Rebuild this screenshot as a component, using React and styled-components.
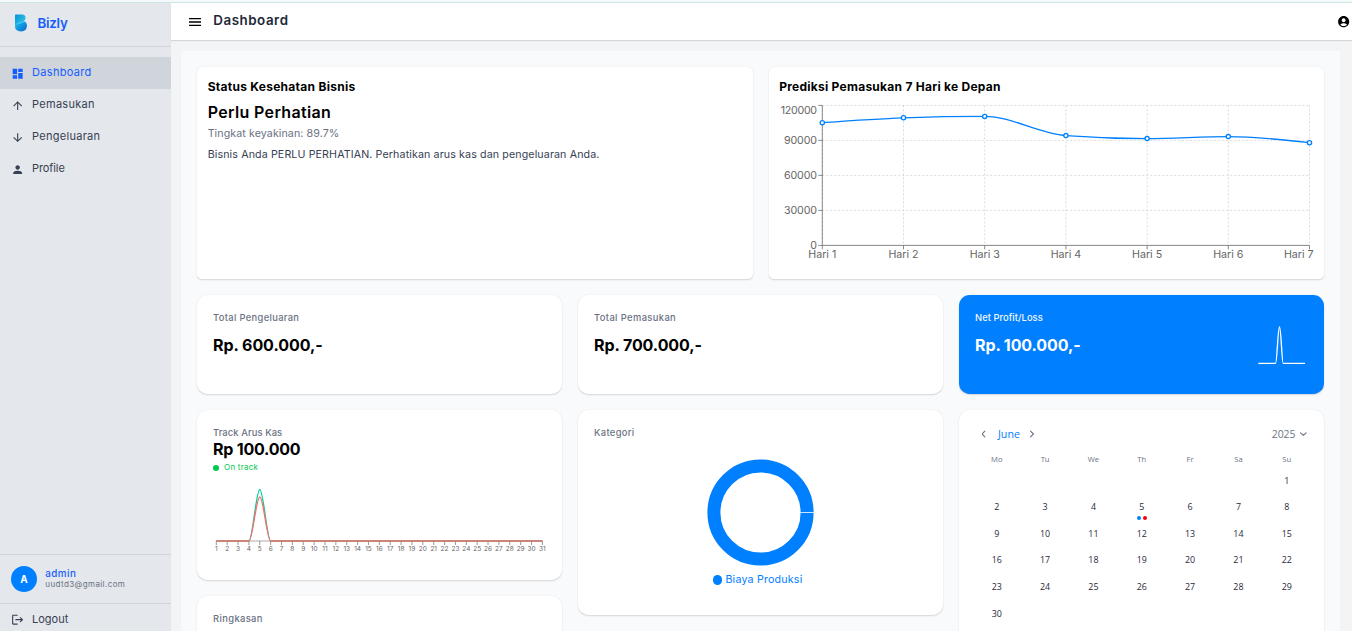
import React from "react";
import styled, { createGlobalStyle } from "styled-components";
import {
  MdDashboard,
  MdArrowUpward,
  MdArrowDownward,
  MdPerson,
  MdLogout,
  MdMenu,
  MdAccountCircle,
} from "react-icons/md";

const SANS = `Inter, "Open Sans", sans-serif`;
const CAL = `"Open Sans", "Noto Sans", sans-serif`;

const Global = createGlobalStyle`
  * { box-sizing: border-box; }
  body { margin: 0; background: #f3f4f6; font-family: ${SANS}; overflow: hidden; }
`;

const Page = styled.div`
  height: 631px;
  display: flex;
  flex-direction: column;
  overflow: hidden;
`;
const TopStrip = styled.div`
  flex: none;
  height: 3px;
  background: #f4f9fa;
  border-bottom: 1px solid #cfe6e6;
`;
const Shell = styled.div`
  flex: 1;
  min-height: 0;
  display: flex;
`;

const Text = styled.div`
  font-size: ${(p) => p.$size}px;
  font-weight: ${(p) => p.$weight || 400};
  letter-spacing: ${(p) => p.$track || 0}px;
  line-height: ${(p) => p.$line || 16}px;
  color: ${(p) => p.$color || "#000"};
  margin-top: ${(p) => p.$top || 0}px;
  white-space: nowrap;
`;

/* Sidebar */
const Sidebar = styled.aside`
  flex: none;
  width: 171px;
  background: #e4e7eb;
  display: flex;
  flex-direction: column;
`;
const Brand = styled.div`
  height: 44px;
  padding: 0 0 2.5px 14px;
  display: flex;
  align-items: center;
  gap: 9.5px;
  border-bottom: 1px solid #d0d4d9;
`;
const Nav = styled.nav`
  flex: 1;
  padding-top: 10px;
`;
const NavItem = styled.div`
  height: 32px;
  padding-left: 11px;
  display: flex;
  align-items: center;
  gap: 7.7px;
  color: ${(p) => (p.$active ? "#155dfc" : "#364153")};
  background: ${(p) => (p.$active ? "#d0d4db" : "transparent")};
  svg { margin-top: 1px; flex: none; }
  span { padding-bottom: 2px; }
`;
const User = styled.div`
  height: 49px;
  padding-left: 11px;
  display: flex;
  align-items: center;
  gap: 8.3px;
  border-top: 1px solid #d0d4d9;
`;
const Avatar = styled.div`
  width: 26px;
  height: 26px;
  border-radius: 50%;
  background: #0080ff;
  color: #fff;
  font-size: 10px;
  font-weight: 700;
  display: flex;
  align-items: center;
  justify-content: center;
`;
const UserText = styled.div`
  padding-bottom: 2px;
`;
const LogoutRow = styled(NavItem)`
  height: 28px;
  padding-top: 3px;
  border-top: 1px solid #d0d4d9;
  span { padding-bottom: 0; }
`;

/* Header and main area */
const Body = styled.div`
  flex: 1;
  min-width: 0;
  display: flex;
  flex-direction: column;
`;
const Header = styled.header`
  flex: none;
  height: 37px;
  background: #fff;
  box-shadow: 0 1px 1px rgba(0, 0, 0, 0.12);
  padding: 0 1.5px 0 16px;
  display: flex;
  align-items: center;
  z-index: 1;
  svg { margin-top: 1px; }
`;
const HeaderTitle = styled(Text)`
  flex: 1;
  padding: 0 0 3px 10.3px;
`;
const Main = styled.main`
  flex: 1;
  min-height: 0;
  padding: 11px 12px 0 10px;
`;
const Canvas = styled.div`
  height: 100%;
  overflow: hidden;
  background: #f9fafb;
  padding: 16px 16px 0;
`;
const Grid = styled.div`
  display: grid;
  grid-template-columns: repeat(${(p) => p.$cols}, minmax(0, 1fr));
  gap: 16px;
  align-items: start;
  margin-bottom: 16px;
`;
const Stack = styled.div`
  display: flex;
  flex-direction: column;
  gap: 16px;
`;
const Card = styled.section`
  height: ${(p) => p.$h}px;
  padding: ${(p) => p.$pad || "15px 16px"};
  border-radius: ${(p) => p.$r || 10.67}px;
  background: ${(p) => p.$bg || "#fff"};
  box-shadow: 0 0.67px 2px rgba(0, 0, 0, 0.08), 0 0.67px 1.33px -0.67px rgba(0, 0, 0, 0.08);
`;
const ProfitCard = styled(Card)`
  display: flex;
  justify-content: space-between;
`;
const Status = styled.div`
  display: flex;
  align-items: center;
  gap: 5px;
  margin-top: 2px;
`;
const Dot = styled.i`
  width: ${(p) => p.$d}px;
  height: ${(p) => p.$d}px;
  border-radius: 50%;
  background: ${(p) => p.$c};
`;
const Drawing = styled.svg`
  display: block;
  overflow: visible;
  margin: ${(p) => p.$m || 0};
  text { font-family: ${SANS}; fill: #666; }
`;
const Legend = styled.div`
  display: flex;
  align-items: center;
  justify-content: center;
  gap: 3.6px;
  padding-right: 6px;
`;

/* Calendar */
const CalHead = styled.div`
  display: flex;
  align-items: center;
  font-family: ${CAL};
  padding: 0 0 0 7px;
  margin-bottom: 9px;
`;
const Month = styled(Text)`
  margin: 0 9.8px 0 8px;
`;
const Year = styled(Text)`
  margin-left: auto;
  margin-right: 4.5px;
`;
const Week = styled.div`
  display: grid;
  grid-template-columns: repeat(7, 48.33px);
  height: ${(p) => p.$h}px;
  margin-left: -2.4px;
  text-align: center;
  font-family: ${CAL};
`;
const Day = styled.div`
  font-size: 8.9px;
  line-height: 14px;
  color: #1e2939;
`;
const WeekDay = styled(Day)`
  font-size: 7.6px;
  color: #6a7282;
`;
const Marks = styled.div`
  display: flex;
  justify-content: center;
  gap: 1.7px;
  margin-top: 2px;
`;

function Logo() {
  return (
    <svg width="14" height="18" viewBox="0 0 14 18">
      <defs>
        <linearGradient id="lgTop" x1="0" y1="0" x2="1" y2="1">
          <stop offset="0" stopColor="#0c8fd0" />
          <stop offset="1" stopColor="#35d3f5" />
        </linearGradient>
        <linearGradient id="lgBottom" x1="0" y1="0" x2="1" y2="1">
          <stop offset="0" stopColor="#2bc6ee" />
          <stop offset="0.5" stopColor="#0f96e0" />
          <stop offset="1" stopColor="#0b66c4" />
        </linearGradient>
      </defs>
      <path d="M1 1.6Q1 .6 2 .6H8.2Q11.6 .7 11.6 4Q11.6 6.8 9 7.4L3.4 9.2L1 12.5Z" fill="url(#lgTop)" />
      <path d="M1 12.5Q1.4 7 7.2 6.7Q13 6.9 13 11.8Q12.8 17.3 7 17.4Q1.2 17.2 1 12.5Z" fill="url(#lgBottom)" />
      <path d="M1 12.2Q3.4 8 8.4 7.4L11.4 6.8Q9 9.6 5.4 9.8Q2.6 10.2 1 12.2Z" fill="#5fe3fb" opacity=".6" />
    </svg>
  );
}

/* Cubic path through the points, with slopes that never overshoot. */
function monotonePath(pts) {
  const n = pts.length;
  const s = [];
  for (let i = 0; i < n - 1; i++)
    s.push((pts[i + 1][1] - pts[i][1]) / (pts[i + 1][0] - pts[i][0]));
  const t = pts.map((_, i) => {
    if (i === 0 || i === n - 1) return null;
    const a = s[i - 1];
    const b = s[i];
    return a * b <= 0
      ? 0
      : Math.sign(a) * Math.min(Math.abs(a), Math.abs(b), Math.abs(a + b) / 4) * 2;
  });
  t[0] = (3 * s[0] - t[1]) / 2;
  t[n - 1] = (3 * s[n - 2] - t[n - 2]) / 2;
  let d = `M${pts[0][0]},${pts[0][1]}`;
  for (let i = 0; i < n - 1; i++) {
    const [x0, y0] = pts[i];
    const [x1, y1] = pts[i + 1];
    const h = (x1 - x0) / 3;
    d += `C${x0 + h},${y0 + h * t[i]} ${x1 - h},${y1 - h * t[i + 1]} ${x1},${y1}`;
  }
  return d;
}

const forecast = [22.7, 17.8, 16.4, 35.6, 38.6, 36.6, 42.7];

function ForecastChart() {
  const left = 43.3;
  const step = 81.2;
  const top = 5.4;
  const bottom = 145.4;
  const right = left + 6 * step;
  const xs = forecast.map((_, i) => left + i * step);
  const ys = [0, 1, 2, 3, 4].map((i) => top + i * 35);
  const pts = forecast.map((y, i) => [xs[i], y]);
  return (
    <Drawing width="534" height="165" $m="5px 0 0">
      <g stroke="#ccc" strokeWidth=".7" strokeDasharray="2 2">
        {ys.map((y) => <line key={y} x1={left} x2={right} y1={y} y2={y} />)}
        {xs.map((x) => <line key={x} y1={top} y2={bottom} x1={x} x2={x} />)}
      </g>
      <g stroke="#666" strokeWidth=".75">
        <line x1={left} x2={left} y1={top} y2={bottom} />
        <line x1={left} x2={right} y1={bottom} y2={bottom} />
        {ys.map((y) => <line key={y} x1={left - 4} x2={left} y1={y} y2={y} />)}
        {xs.map((x) => <line key={x} y1={bottom} y2={bottom + 4} x1={x} x2={x} />)}
      </g>
      {["120000", "90000", "60000", "30000", "0"].map((v, i) => (
        <text key={v} x="37.8" y={(i === 0 ? 10.3 : ys[i]) + 3.8} fontSize="10.67"
          letterSpacing={i === 0 ? "-.27" : "-.15"} textAnchor="end">{v}</text>
      ))}
      {xs.map((x, i) => (
        <text key={x} x={i === 6 ? 519.7 : x} y="158.2" fontSize="10.67" letterSpacing="-.02"
          textAnchor="middle">Hari {i + 1}</text>
      ))}
      <path d={monotonePath(pts)} fill="none" stroke="#0080ff" strokeWidth="1.33" />
      {pts.map(([x, y]) => (
        <circle key={x} cx={x} cy={y} r="2.1" fill="#fff" stroke="#0080ff" strokeWidth="1.33" />
      ))}
    </Drawing>
  );
}

function FlowChart() {
  const x = (d) => 3.3 + (d - 1) * 10.87;
  const days = Array.from({ length: 31 }, (_, i) => i + 1);
  const curve = (peak) => monotonePath(days.map((d) => [x(d), d === 5 ? peak : 56]));
  return (
    <Drawing width="333" height="70" $m="10px 0 0">
      <g stroke="#666" strokeWidth=".67">
        <line x1={x(1)} x2={x(31)} y1="56" y2="56" stroke="#aaa" strokeWidth="1" />
        {days.map((d) => <line key={d} x1={x(d)} x2={x(d)} y1="56" y2="60" />)}
      </g>
      {days.map((d) => (
        <text key={d} x={x(d)} y="66" fontSize="6.5" textAnchor="middle">{d}</text>
      ))}
      <path d={curve(4.5)} fill="none" stroke="#00d09c" strokeWidth="1.33" />
      <path d={curve(12)} fill="none" stroke="#ff6b6b" strokeWidth="1.33" />
    </Drawing>
  );
}

function Sparkline() {
  return (
    <Drawing width="47" height="40" $m="16px 3px 0 0">
      <path d="M.3 37.3H17.6C19 37.3 19.9 1 21.5 1S23.8 37.3 25.2 37.3H47" fill="none" stroke="#fff" strokeWidth="1.33" />
    </Drawing>
  );
}

function Donut() {
  return (
    <Drawing width="107" height="107" viewBox="0 0 107 107" $m="18px auto 6px">
      <circle cx="53.5" cy="53.5" r="46.6" fill="none" stroke="#0080ff" strokeWidth="13" />
      <line x1="93.5" x2="107" y1="53.5" y2="53.5" stroke="#fff" strokeWidth=".8" />
    </Drawing>
  );
}

function Chevron({ d }) {
  return (
    <svg width="8" height="8" viewBox="0 0 8 8" fill="none" stroke="#6a7282" strokeWidth="1.1"
      strokeLinecap="round" strokeLinejoin="round"><path d={d} /></svg>
  );
}

const nav = [
  { label: "Dashboard", Icon: MdDashboard, track: 0.32, active: true },
  { label: "Pemasukan", Icon: MdArrowUpward, track: 0.29 },
  { label: "Pengeluaran", Icon: MdArrowDownward, track: 0.28 },
  { label: "Profile", Icon: MdPerson, track: -0.1 },
];

const weeks = [
  ["", "", "", "", "", "", 1],
  ...[2, 9, 16, 23].map((s) => Array.from({ length: 7 }, (_, i) => s + i)),
  [30, "", "", "", "", "", ""],
];

function CardLabel({ children, track = 0.35, color = "#6a7282" }) {
  return <Text $size={9.33} $weight={500} $track={track} $color={color}>{children}</Text>;
}

function Amount({ children, track, color }) {
  return <Text $size={16} $weight={700} $track={track} $line={20} $top={8.5} $color={color}>{children}</Text>;
}

export default function App() {
  return (
    <Page>
      <Global />
      <TopStrip />
      <Shell>
        <Sidebar>
          <Brand>
            <Logo />
            <Text $size={13.33} $weight={600} $track={-0.25} $color="#155dfc">Bizly</Text>
          </Brand>
          <Nav>
            {nav.map(({ label, Icon, track, active }) => (
              <NavItem key={label} $active={active}>
                <Icon size={13.33} />
                <Text as="span" $size={11} $track={track} $color="inherit">{label}</Text>
              </NavItem>
            ))}
          </Nav>
          <User>
            <Avatar>A</Avatar>
            <UserText>
              <Text $size={9.8} $weight={500} $track={0.45} $line={11} $color="#155dfc">admin</Text>
              <Text $size={8} $track={0.4} $line={10} $color="#6a7282">uudtd3@gmail.com</Text>
            </UserText>
          </User>
          <LogoutRow>
            <MdLogout size={13.33} />
            <Text as="span" $size={11} $color="inherit">Logout</Text>
          </LogoutRow>
        </Sidebar>

        <Body>
          <Header>
            <MdMenu size={16} />
            <HeaderTitle $size={13.33} $weight={600} $track={0.55} $color="#1e2939">Dashboard</HeaderTitle>
            <MdAccountCircle size={13.33} />
          </Header>
          <Main>
            <Canvas>
              <Grid $cols={2}>
                <Card $h={212} $r={5.33} $pad="12px 10.67px">
                  <Text $size={12} $weight={700} $track={0.28}>Status Kesehatan Bisnis</Text>
                  <Text $size={16} $weight={600} $track={0.35} $line={20} $top={6.5}>Perlu Perhatian</Text>
                  <Text $size={10.67} $track={0.09} $top={4.7} $color="#6a7282">Tingkat keyakinan: 89.7%</Text>
                  <Text $size={10.67} $track={0.12} $top={5.2} $color="#364153">
                    Bisnis Anda PERLU PERHATIAN. Perhatikan arus kas dan pengeluaran Anda.
                  </Text>
                </Card>
                <Card $h={212} $r={5.33} $pad="12px 10.67px">
                  <Text $size={12} $weight={700} $track={0.26}>Prediksi Pemasukan 7 Hari ke Depan</Text>
                  <ForecastChart />
                </Card>
              </Grid>

              <Grid $cols={3}>
                <Card $h={99}>
                  <CardLabel>Total Pengeluaran</CardLabel>
                  <Amount track={-0.05}>Rp. 600.000,-</Amount>
                </Card>
                <Card $h={99}>
                  <CardLabel track={0.4}>Total Pemasukan</CardLabel>
                  <Amount track={-0.08}>Rp. 700.000,-</Amount>
                </Card>
                <ProfitCard $h={99} $bg="#0080ff">
                  <div>
                    <CardLabel track={0.07} color="#f0f7ff">Net Profit/Loss</CardLabel>
                    <Amount track={-0.1} color="#fff">Rp. 100.000,-</Amount>
                  </div>
                  <Sparkline />
                </ProfitCard>
              </Grid>

              <Grid $cols={3}>
                <Stack>
                  <Card $h={170}>
                    <CardLabel track={0.12}>Track Arus Kas</CardLabel>
                    <Text $size={16} $weight={700} $track={-0.22} $line={18} $top={-1}>Rp 100.000</Text>
                    <Status>
                      <Dot $d={6} $c="#00c950" />
                      <Text $size={8} $track={0.26} $line={15} $color="#00c950">On track</Text>
                    </Status>
                    <FlowChart />
                  </Card>
                  <Card $h={170}>
                    <CardLabel track={0.4}>Ringkasan</CardLabel>
                  </Card>
                </Stack>
                <Card $h={205}>
                  <CardLabel>Kategori</CardLabel>
                  <Donut />
                  <Legend>
                    <Dot $d={9.3} $c="#0080ff" />
                    <Text $size={10.67} $track={0.2} $color="#0080ff">Biaya Produksi</Text>
                  </Legend>
                </Card>
                <Card $h={240}>
                  <CalHead>
                    <Chevron d="M2.8 1.2H2.8L0 4L2.8 6.8" />
                    <Month $size={10.67} $weight={500} $line={18} $color="#0080ff">June</Month>
                    <Chevron d="M.6 1.2L3.4 4L.6 6.8" />
                    <Year $size={10.4} $line={18} $color="#6a7282">2025</Year>
                    <Chevron d="M.5 2.8L3.3 5.4L6.1 2.8" />
                  </CalHead>
                  <Week $h={21.6}>
                    {["Mo", "Tu", "We", "Th", "Fr", "Sa", "Su"].map((d) => <WeekDay key={d}>{d}</WeekDay>)}
                  </Week>
                  {weeks.map((w, r) => (
                    <Week key={r} $h={26.6}>
                      {w.map((d, i) => (
                        <Day key={i}>
                          {d}
                          {d === 5 && <Marks><Dot $d={4.3} $c="#0080ff" /><Dot $d={4.3} $c="#fb0011" /></Marks>}
                        </Day>
                      ))}
                    </Week>
                  ))}
                </Card>
              </Grid>
            </Canvas>
          </Main>
        </Body>
      </Shell>
    </Page>
  );
}
